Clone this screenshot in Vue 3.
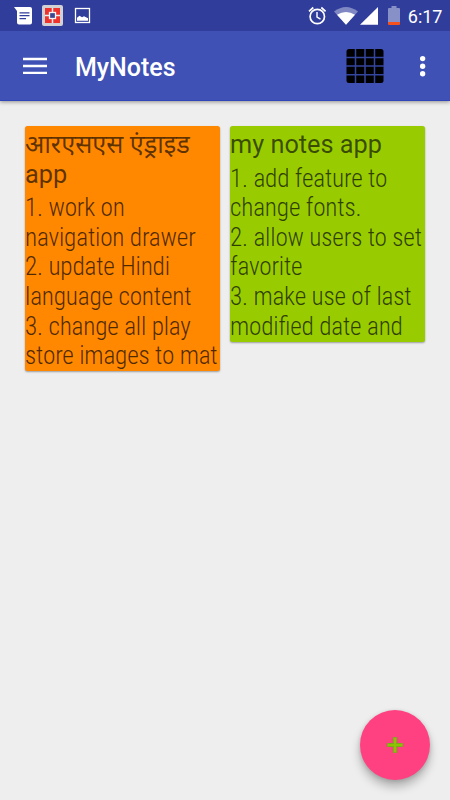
<script setup>
const notes = [
  {
    id: 1,
    color: "orange",
    title: ["आरएसएस एंड्राइड", "app"],
    lines: [
      "1. work on",
      "navigation drawer",
      "2. update Hindi",
      "language content",
      "3. change all play",
      "store images to mat",
    ],
  },
  {
    id: 2,
    color: "green",
    title: ["my notes app"],
    lines: [
      "1. add feature to",
      "change fonts.",
      "2. allow users to set",
      "favorite",
      "3. make use of last",
      "modified date and",
    ],
  },
];
</script>

<template>
  <div class="screen">
    <div class="status-bar">
      <svg class="status-icons" width="450" height="31" viewBox="0 0 450 31">
        <!-- message -->
        <path
          d="M14 7h16a2 2 0 0 1 2 2v13.500a2 2 0 0 1-2 2H19a2 2 0 0 1-2-2V11z"
          fill="#fff"
        />
        <path
          d="M19.500 12.800h10M19.500 15.700h10M19.500 18.700h6.500"
          stroke="#303d9b"
          stroke-width="1.300"
        />
        <!-- bank -->
        <rect x="42" y="5" width="21" height="21" rx="2" fill="#d3d0d3" />
        <rect x="45" y="8" width="15" height="15" fill="#f0322d" />
        <path d="M52.500 8v15M45 15.500h15" stroke="#eee" stroke-width="1.500" />
        <rect
          x="49.500"
          y="12.500"
          width="6"
          height="6"
          fill="#3b4590"
          stroke="#f4f4f4"
          stroke-width="1.300"
        />
        <!-- picture -->
        <rect
          x="75.500"
          y="8.500"
          width="14"
          height="14"
          fill="none"
          stroke="#fff"
          stroke-width="1.300"
        />
        <path d="M77 20.700v-3l2.500-2 2.500 1.500 2-1 4 2v2.500z" fill="#fff" />
        <!-- alarm -->
        <g fill="none" stroke="#fff">
          <circle cx="317.300" cy="16.500" r="7.200" stroke-width="1.700" />
          <path d="M317 12v5l3.500 2.200" stroke-width="1.400" />
          <path d="M309 11.300l4.300-3.800M325.600 11.300l-4.300-3.800" stroke-width="1.700" />
        </g>
        <!-- wifi -->
        <path d="M334 11.500Q346 2.500 358 11.500L346 24.800z" fill="#7f88c3" />
        <path d="M337 14.800Q346 9 355 14.800L346 24.800z" fill="#fff" />
        <!-- signal -->
        <path d="M360 24.800L378 7V24.800z" fill="#fff" />
        <!-- battery -->
        <path
          d="M391.500 6h5v2h2.500a1 1 0 0 1 1 1v13h-12V9a1 1 0 0 1 1-1h2.500z"
          fill="#8890c8"
        />
        <path d="M388 22h12v2a1 1 0 0 1-1 1h-10a1 1 0 0 1-1-1z" fill="#f4511e" />
      </svg>
      <span class="clock">6:17</span>
    </div>

    <header class="toolbar">
      <svg class="menu" width="24" height="17" viewBox="0 0 24 17">
        <path d="M0 2h24M0 9h24M0 15.800h24" stroke="#fff" stroke-width="2.300" />
      </svg>
      <h1>MyNotes</h1>
      <svg class="grid" width="38" height="34" viewBox="0 0 38 34">
        <rect x="0.500" width="37" height="34" rx="2.500" />
        <path
          d="M9.500 0v34M19 0v34M28.500 0v34M0 8.500h38M0 17h38M0 25.800h38"
          stroke="#3445a0"
          stroke-width="1.500"
        />
      </svg>
      <svg class="more" width="6" height="22" viewBox="0 0 6 22" fill="#fff">
        <circle cx="2.600" cy="3.600" r="2.700" />
        <circle cx="2.600" cy="11.200" r="2.700" />
        <circle cx="2.600" cy="18.700" r="2.700" />
      </svg>
    </header>

    <main class="notes">
      <article v-for="note in notes" :key="note.id" class="note" :class="note.color">
        <h2>
          <span v-for="part in note.title" :key="part">{{ part }}</span>
        </h2>
        <p>
          <span v-for="line in note.lines" :key="line">{{ line }}</span>
        </p>
      </article>
    </main>

    <button class="fab" aria-label="Add note">
      <svg width="18" height="18" viewBox="0 0 18 18">
        <path d="M7 1h4v6h6v4h-6v6H7v-6H1V7h6z" fill="#7fa81a" />
        <path d="M8 2h2v6h6v2h-6v6H8v-6H2V8h6z" fill="#8cc400" />
      </svg>
    </button>
  </div>
</template>

<style>
body {
  background: #eeeeee;
}
</style>

<style scoped>
.screen {
  width: 450px;
  height: 800px;
  overflow: hidden;
  position: relative;
  background: #eeeeee;
  font-family: Roboto, "Noto Sans", sans-serif;
}
.status-bar {
  height: 31px;
  position: relative;
  background: #303d9b;
}
.status-icons {
  display: block;
}
.clock {
  position: absolute;
  right: 7.5px;
  top: 5px;
  color: #fff;
  font-size: 18px;
  line-height: 24px;
  font-weight: 450;
}
.toolbar {
  height: 70px;
  box-sizing: border-box;
  display: flex;
  align-items: center;
  padding: 0 24px 0 23px;
  background: #3f51b5;
  border-bottom: 1px solid #2f45b8;
  box-shadow: 0 1px 4px rgba(0, 0, 0, 0.4);
}
.toolbar h1 {
  margin: 4px 0 0 28px;
  flex: 1;
  color: #fff;
  font-size: 25px;
  font-weight: 480;
}
.more {
  margin-left: 36px;
}
.notes {
  display: flex;
  align-items: flex-start;
  gap: 10px;
  padding: 25px;
}
.note {
  width: 195px;
  box-sizing: border-box;
  border-radius: 2.5px;
  box-shadow: 0 1px 2px rgba(0, 0, 0, 0.35);
  white-space: nowrap;
}
.orange {
  height: 245px;
  background: #ff8800;
}
.green {
  height: 216px;
  background: #99cc00;
}
.note h2 {
  margin: 0;
  padding-top: 4px;
  color: rgba(0, 0, 0, 0.63);
  font-size: 25.3px;
  line-height: 29.6px;
  font-weight: 450;
}
.note p {
  margin: 4px 0 0;
  color: rgba(0, 0, 0, 0.7);
  font-family: "Roboto Condensed", Roboto, sans-serif;
  font-size: 25.2px;
  line-height: 29.6px;
  /* tracking turns ligatures off, so ask for them back */
  letter-spacing: -0.18px;
  font-feature-settings: "liga" 1;
  font-weight: 290;
  font-stretch: 75%;
}
.note span {
  display: block;
}
.fab {
  position: absolute;
  left: 360px;
  top: 710px;
  width: 70px;
  height: 70px;
  padding: 0;
  border: 0;
  border-radius: 50%;
  display: flex;
  align-items: center;
  justify-content: center;
  background: #ff4081;
  box-shadow: 0 7px 10px rgba(0, 0, 0, 0.25), 0 1px 4px rgba(0, 0, 0, 0.15);
}
</style>
